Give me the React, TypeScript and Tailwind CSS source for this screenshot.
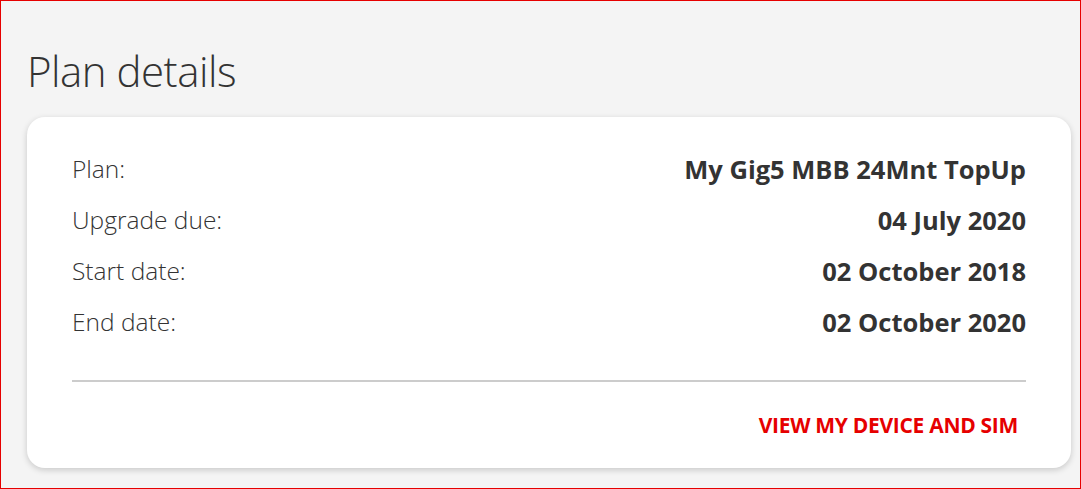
import React from "react";

const rows = [
  { label: "Plan:", value: "My Gig5 MBB 24Mnt TopUp" },
  { label: "Upgrade due:", value: "04 July 2020" },
  { label: "Start date:", value: "02 October 2018" },
  { label: "End date:", value: "02 October 2020" },
];

export default function App() {
  return (
    <div
      className="h-[489px] w-[1081px] overflow-hidden border border-[#e60000] bg-[#f4f4f4] text-[#333333]"
      style={{ fontFamily: '"Open Sans", "Noto Sans", sans-serif' }}
    >
      <h1 className="ml-[26px] mt-[42px] text-[42px] font-light leading-[56px] tracking-[-0.5px]">
        Plan details
      </h1>
      <div className="ml-[26px] mt-[18px] w-[1044px] rounded-[18px] bg-white px-[45px] pt-[37px] pb-[30px] shadow-[0_2px_6px_rgba(0,0,0,0.18)]">
        <div className="flex flex-col gap-[21px]">
          {rows.map((r) => (
            <div key={r.label} className="flex h-[30px] items-center justify-between">
              <span className="text-[24.5px] font-light">{r.label}</span>
              <span className="text-[25.5px] font-bold">{r.value}</span>
            </div>
          ))}
        </div>
        <div className="mt-[43px] h-[2px] bg-[#cccccc]" />
        <div className="mt-[30px] flex justify-end pr-[8px]">
          <a className="text-[21px] font-bold leading-[26px] tracking-[-0.3px] text-[#e60000]">
            VIEW MY DEVICE AND SIM
          </a>
        </div>
      </div>
    </div>
  );
}
